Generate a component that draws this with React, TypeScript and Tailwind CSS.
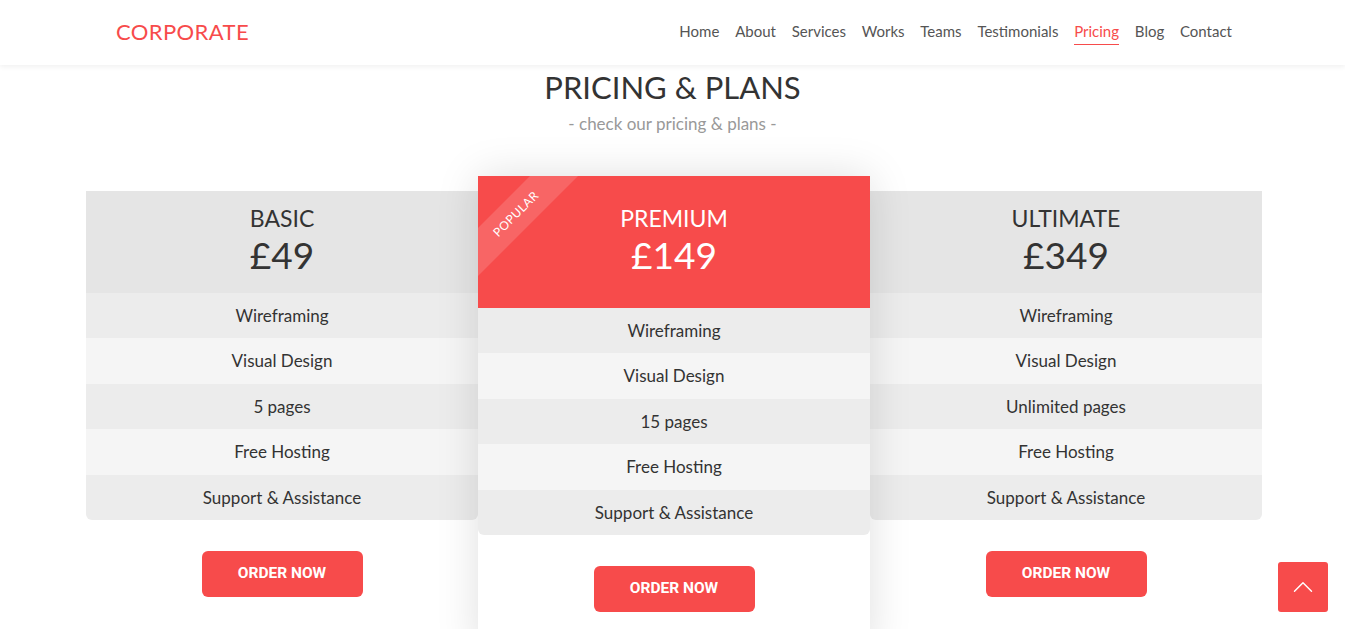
import { ChevronUp } from "lucide-react";

const NAV = ["Home", "About", "Services", "Works", "Teams", "Testimonials", "Pricing", "Blog", "Contact"];

type Plan = {
  name: string;
  price: string;
  features: string[];
  featured?: boolean;
};

const PLANS: Plan[] = [
  { name: "BASIC", price: "£49", features: ["Wireframing", "Visual Design", "5 pages", "Free Hosting", "Support & Assistance"] },
  {
    name: "PREMIUM",
    price: "£149",
    features: ["Wireframing", "Visual Design", "15 pages", "Free Hosting", "Support & Assistance"],
    featured: true,
  },
  { name: "ULTIMATE", price: "£349", features: ["Wireframing", "Visual Design", "Unlimited pages", "Free Hosting", "Support & Assistance"] },
];

function PlanCard({ plan }: { plan: Plan }) {
  const featured = !!plan.featured;
  return (
    <div
      className={
        featured
          ? "relative z-10 bg-white pb-[40px] shadow-[0_0_40px_rgba(0,0,0,0.13)]"
          : "relative mt-[15px]"
      }
    >
      <div
        className={
          featured
            ? "relative overflow-hidden bg-[#f74b4b] pt-[29px] pb-[33px] text-center text-white"
            : "bg-[#e5e5e5] pt-[14px] pb-[18px] text-center text-[#333]"
        }
      >
        {featured && (
          <div className="absolute left-[-42px] top-[21px] flex h-[34px] w-[160px] -rotate-45 items-center justify-center bg-white/15 text-[12px] tracking-[0.5px] text-white">
            POPULAR
          </div>
        )}
        <div className="text-[23px] leading-[26px]">{plan.name}</div>
        <div className="mt-1 text-[37px] leading-[40px]">{plan.price}</div>
      </div>
      <ul className="overflow-hidden rounded-b-md">
        {plan.features.map((f, i) => (
          <li
            key={f}
            className={
              "flex h-[45.4px] items-center justify-center text-[17px] text-[#333] " +
              (i % 2 === 0 ? "bg-[#ececec]" : "bg-[#f5f5f5]")
            }
          >
            {f}
          </li>
        ))}
      </ul>
      <div className="mt-[31px] flex justify-center">
        <button className="h-[46px] w-[161px] rounded-md bg-[#f74b4b] font-['Roboto',sans-serif] text-[15.5px] font-bold text-white">
          ORDER NOW
        </button>
      </div>
    </div>
  );
}

export default function App() {
  return (
    <div className="relative h-[629px] overflow-hidden bg-white font-['Lato','Noto_Sans',sans-serif]">
      <header className="relative z-20 h-[65px] bg-white shadow-[0_2px_5px_rgba(0,0,0,0.06)]">
        <div className="ml-[116px] flex h-full w-[1116px] items-center justify-between">
          <div className="-mt-[3px] text-[22px] tracking-[0.4px] text-[#f74b4b]">CORPORATE</div>
          <nav className="-mt-[2px] flex items-center gap-[15.8px] text-[15px] text-[#555]">
            {NAV.map((n) => (
              <a
                key={n}
                className={
                  n === "Pricing"
                    ? "border-b border-[#f74b4b] pb-[1px] pt-[2px] text-[#f74b4b]"
                    : "border-b border-transparent pb-[1px] pt-[2px]"
                }
              >
                {n}
              </a>
            ))}
          </nav>
        </div>
      </header>

      <section className="text-center">
        <h2 className="pt-[2px] text-[31px] leading-[40px] text-[#333]">PRICING &amp; PLANS</h2>
        <p className="mt-[7px] text-[17px] leading-[20px] text-[#999]">- check our pricing &amp; plans -</p>
      </section>

      <div className="ml-[86px] mt-[42px] grid w-[1176px] grid-cols-3 items-start">
        {PLANS.map((p) => (
          <PlanCard key={p.name} plan={p} />
        ))}
      </div>

      <button className="absolute left-[1278px] top-[562px] z-30 flex h-[50px] w-[50px] items-center justify-center rounded-[3px] bg-[#f74b4b] text-white">
        <ChevronUp size={34} strokeWidth={1} />
      </button>
    </div>
  );
}
